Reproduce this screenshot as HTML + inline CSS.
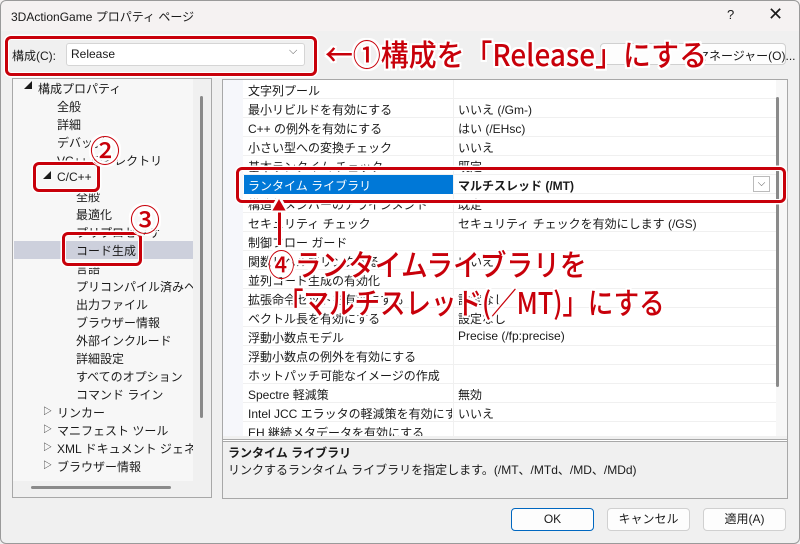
<!DOCTYPE html>
<html><head><meta charset="utf-8"><style>
*{margin:0;padding:0;box-sizing:border-box}
body{width:800px;height:544px;overflow:hidden;background:#f0f0f0;font-family:"Liberation Sans","Noto Sans CJK JP",sans-serif;font-size:12px;color:#1a1a1a;position:relative}
.a{position:absolute}
.t{white-space:nowrap}
.red{color:#c8000a;font-family:"Noto Sans CJK JP",sans-serif;font-weight:500;text-shadow:-2px -2px 0 #fff,2px -2px 0 #fff,-2px 2px 0 #fff,2px 2px 0 #fff,0 2px 0 #fff,0 -2px 0 #fff,2px 0 0 #fff,-2px 0 0 #fff;white-space:nowrap;line-height:1;transform-origin:0 0}
.box{position:absolute;border:3px solid #c8000a;border-radius:6px;box-shadow:0 0 0 1.5px #fff,inset 0 0 0 1px #fff}
.row{position:absolute;left:243px;width:533px;height:19px;border-bottom:1px solid #f0f0f0;background:#fff}
.row span{position:absolute;top:2px;white-space:nowrap}
.row .n{left:5px;max-width:204px;overflow:hidden}.row .v{left:215px}
.row:after{content:"";position:absolute;left:210px;top:0;bottom:0;border-left:1px solid #f0f0f0}
.ti{position:absolute;white-space:nowrap}
.btn{position:absolute;top:508px;width:83px;height:23px;background:#fdfdfd;border:1px solid #d0d0d0;border-radius:4px;text-align:center;line-height:21px}
</style></head><body>
<div class="a" style="left:0;top:0;width:800px;height:31px;background:#f5f2f2"></div>
<div class="a t" style="left:11px;top:8px">3DActionGame プロパティ ページ</div>
<div class="a t" style="left:727px;top:7px;font-size:13px">?</div>
<div class="a t" style="left:768px;top:4px;font-size:18px;font-weight:300">✕</div>

<div class="a t" style="left:12px;top:47px">構成(C):</div>
<div class="a" style="left:66px;top:43px;width:239px;height:23px;background:#fff;border:1px solid #d5d5d5;border-radius:3px"></div>
<div class="a t" style="left:71px;top:47px">Release</div>
<div class="a t" style="left:289px;top:45px;font-size:11px;color:#555">⌵</div>
<div class="a" style="left:600px;top:43px;width:186px;height:22px;background:#fdfdfd;border:1px solid #d0d0d0;border-radius:4px"></div>
<div class="a t" style="left:697px;top:47px;font-size:12px">マネージャー(O)...</div>

<!-- tree -->
<div class="a" style="left:12px;top:78px;width:200px;height:420px;border:1px solid #a8a8a8;background:#f0f0f0"></div>
<div class="a" style="left:13px;top:79px;width:180px;height:402px;background:#f7f7f7"></div>
<div class="a" style="left:14px;top:241px;width:179px;height:18px;background:#cdd0dc"></div>
<div class="a" style="left:200px;top:96px;width:3px;height:322px;background:#8a8a8a;border-radius:2px"></div>
<div class="a" style="left:31px;top:486px;width:140px;height:3px;background:#8a8a8a;border-radius:2px"></div>
<div class="a" style="left:0;top:0;width:193px;height:481px;overflow:hidden">
<div class="ti" style="left:24px;top:80px;font-size:8px">◢</div>
<div class="ti" style="left:38px;top:80px">構成プロパティ</div>
<div class="ti" style="left:57px;top:98px">全般</div>
<div class="ti" style="left:57px;top:116px">詳細</div>
<div class="ti" style="left:57px;top:134px">デバッグ</div>
<div class="ti" style="left:57px;top:152px">VC++ ディレクトリ</div>
<div class="ti" style="left:43px;top:170px;font-size:8px">◢</div>
<div class="ti" style="left:57px;top:170px">C/C++</div>
<div class="ti" style="left:76px;top:188px">全般</div>
<div class="ti" style="left:76px;top:206px">最適化</div>
<div class="ti" style="left:76px;top:224px">プリプロセッサ</div>
<div class="ti" style="left:76px;top:242px">コード生成</div>
<div class="ti" style="left:76px;top:260px">言語</div>
<div class="ti" style="left:76px;top:278px">プリコンパイル済みヘッダー</div>
<div class="ti" style="left:76px;top:296px">出力ファイル</div>
<div class="ti" style="left:76px;top:314px">ブラウザー情報</div>
<div class="ti" style="left:76px;top:332px">外部インクルード</div>
<div class="ti" style="left:76px;top:350px">詳細設定</div>
<div class="ti" style="left:76px;top:368px">すべてのオプション</div>
<div class="ti" style="left:76px;top:386px">コマンド ライン</div>
<div class="ti" style="left:43px;top:404px;font-size:9px">▷</div><div class="ti" style="left:57px;top:404px">リンカー</div>
<div class="ti" style="left:43px;top:422px;font-size:9px">▷</div><div class="ti" style="left:57px;top:422px">マニフェスト ツール</div>
<div class="ti" style="left:43px;top:440px;font-size:9px">▷</div><div class="ti" style="left:57px;top:440px">XML ドキュメント ジェネレーター</div>
<div class="ti" style="left:43px;top:458px;font-size:9px">▷</div><div class="ti" style="left:57px;top:458px">ブラウザー情報</div>
</div>

<!-- grid -->
<div class="a" style="left:222px;top:79px;width:566px;height:419px;border:1px solid #a8a8a8;background:#fff"></div>
<div class="a" style="left:223px;top:80px;width:20px;height:356px;background:#f6f7fb"></div>
<div class="a" style="left:776px;top:80px;width:11px;height:356px;background:#f7f7f7"></div>
<div class="a" style="left:776px;top:97px;width:3px;height:290px;background:#8a8a8a;border-radius:2px"></div>
<div class="row" style="top:80px"><span class="n">文字列プール</span></div>
<div class="row" style="top:99px"><span class="n">最小リビルドを有効にする</span><span class="v">いいえ (/Gm-)</span></div>
<div class="row" style="top:118px"><span class="n">C++ の例外を有効にする</span><span class="v">はい (/EHsc)</span></div>
<div class="row" style="top:137px"><span class="n">小さい型への変換チェック</span><span class="v">いいえ</span></div>
<div class="row" style="top:156px"><span class="n">基本ランタイム チェック</span><span class="v">既定</span></div>
<div class="row" style="top:175px"><span class="a" style="left:1px;top:0;width:209px;height:19px;background:#0078d7"></span><span class="n" style="color:#fff">ランタイム ライブラリ</span><span class="v" style="font-weight:bold">マルチスレッド (/MT)</span><span class="a" style="left:510px;top:1px;width:17px;height:16px;border:1px solid #bbb;background:#fff;font-size:10px;text-align:center;line-height:14px;color:#555">⌵</span></div>
<div class="row" style="top:194px"><span class="n">構造体メンバーのアラインメント</span><span class="v">既定</span></div>
<div class="row" style="top:213px"><span class="n">セキュリティ チェック</span><span class="v">セキュリティ チェックを有効にします (/GS)</span></div>
<div class="row" style="top:232px"><span class="n">制御フロー ガード</span></div>
<div class="row" style="top:251px"><span class="n">関数レベルでリンクする</span><span class="v">いいえ</span></div>
<div class="row" style="top:270px"><span class="n">並列コード生成の有効化</span></div>
<div class="row" style="top:289px"><span class="n">拡張命令セットを有効にする</span><span class="v">設定なし</span></div>
<div class="row" style="top:308px"><span class="n">ベクトル長を有効にする</span><span class="v">設定なし</span></div>
<div class="row" style="top:327px"><span class="n">浮動小数点モデル</span><span class="v">Precise (/fp:precise)</span></div>
<div class="row" style="top:346px"><span class="n">浮動小数点の例外を有効にする</span></div>
<div class="row" style="top:365px"><span class="n">ホットパッチ可能なイメージの作成</span></div>
<div class="row" style="top:384px"><span class="n">Spectre 軽減策</span><span class="v">無効</span></div>
<div class="row" style="top:403px"><span class="n">Intel JCC エラッタの軽減策を有効にする</span><span class="v">いいえ</span></div>
<div class="row" style="top:422px;height:14px;overflow:hidden;border:0"><span class="n">EH 継続メタデータを有効にする</span></div>
<div class="a" style="left:223px;top:436px;width:564px;height:3px;background:#f0f0f0"></div>
<div class="a" style="left:222px;top:439px;width:566px;height:1px;background:#a8a8a8"></div>
<div class="a" style="left:222px;top:441px;width:566px;height:58px;border:1px solid #a8a8a8;background:#f0f0f0"></div>
<div class="a t" style="left:228px;top:444px;font-weight:bold">ランタイム ライブラリ</div>
<div class="a t" style="left:228px;top:461px">リンクするランタイム ライブラリを指定します。(/MT、/MTd、/MD、/MDd)</div>

<div class="btn" style="left:511px;border:1px solid #0067c0">OK</div>
<div class="btn" style="left:607px">キャンセル</div>
<div class="btn" style="left:703px">適用(A)</div>
<div class="a" style="left:0;top:0;width:800px;height:544px;border:1px solid #9a9a9a;border-radius:6px;pointer-events:none"></div>

<!-- annotations -->
<div class="box" style="left:5px;top:36px;width:312px;height:40px"></div>
<div class="box" style="left:33px;top:162px;width:67px;height:30px"></div>
<div class="box" style="left:62px;top:232px;width:80px;height:34px"></div>
<div class="box" style="left:236px;top:167px;width:550px;height:36px"></div>
<div class="red a" style="left:325px;top:38px;font-size:30px;transform:scaleX(0.93)">←①構成を「Release」にする</div>
<div class="red a" style="left:90px;top:134px;font-size:30px">②</div>
<div class="red a" style="left:130px;top:203px;font-size:30px">③</div>
<div class="a" style="left:278px;top:205px;width:3px;height:40px;background:#c8000a;box-shadow:0 0 0 1px #fff"></div>
<div class="red a" style="left:272px;top:199px;font-size:14px">▲</div>
<div class="red a" style="left:268px;top:248px;font-size:30px;transform:scaleX(0.89)">④ランタイムライブラリを</div>
<div class="red a" style="left:278px;top:286px;font-size:30px;transform:scaleX(0.85)">「マルチスレッド(／MT)」にする</div>
</body></html>
